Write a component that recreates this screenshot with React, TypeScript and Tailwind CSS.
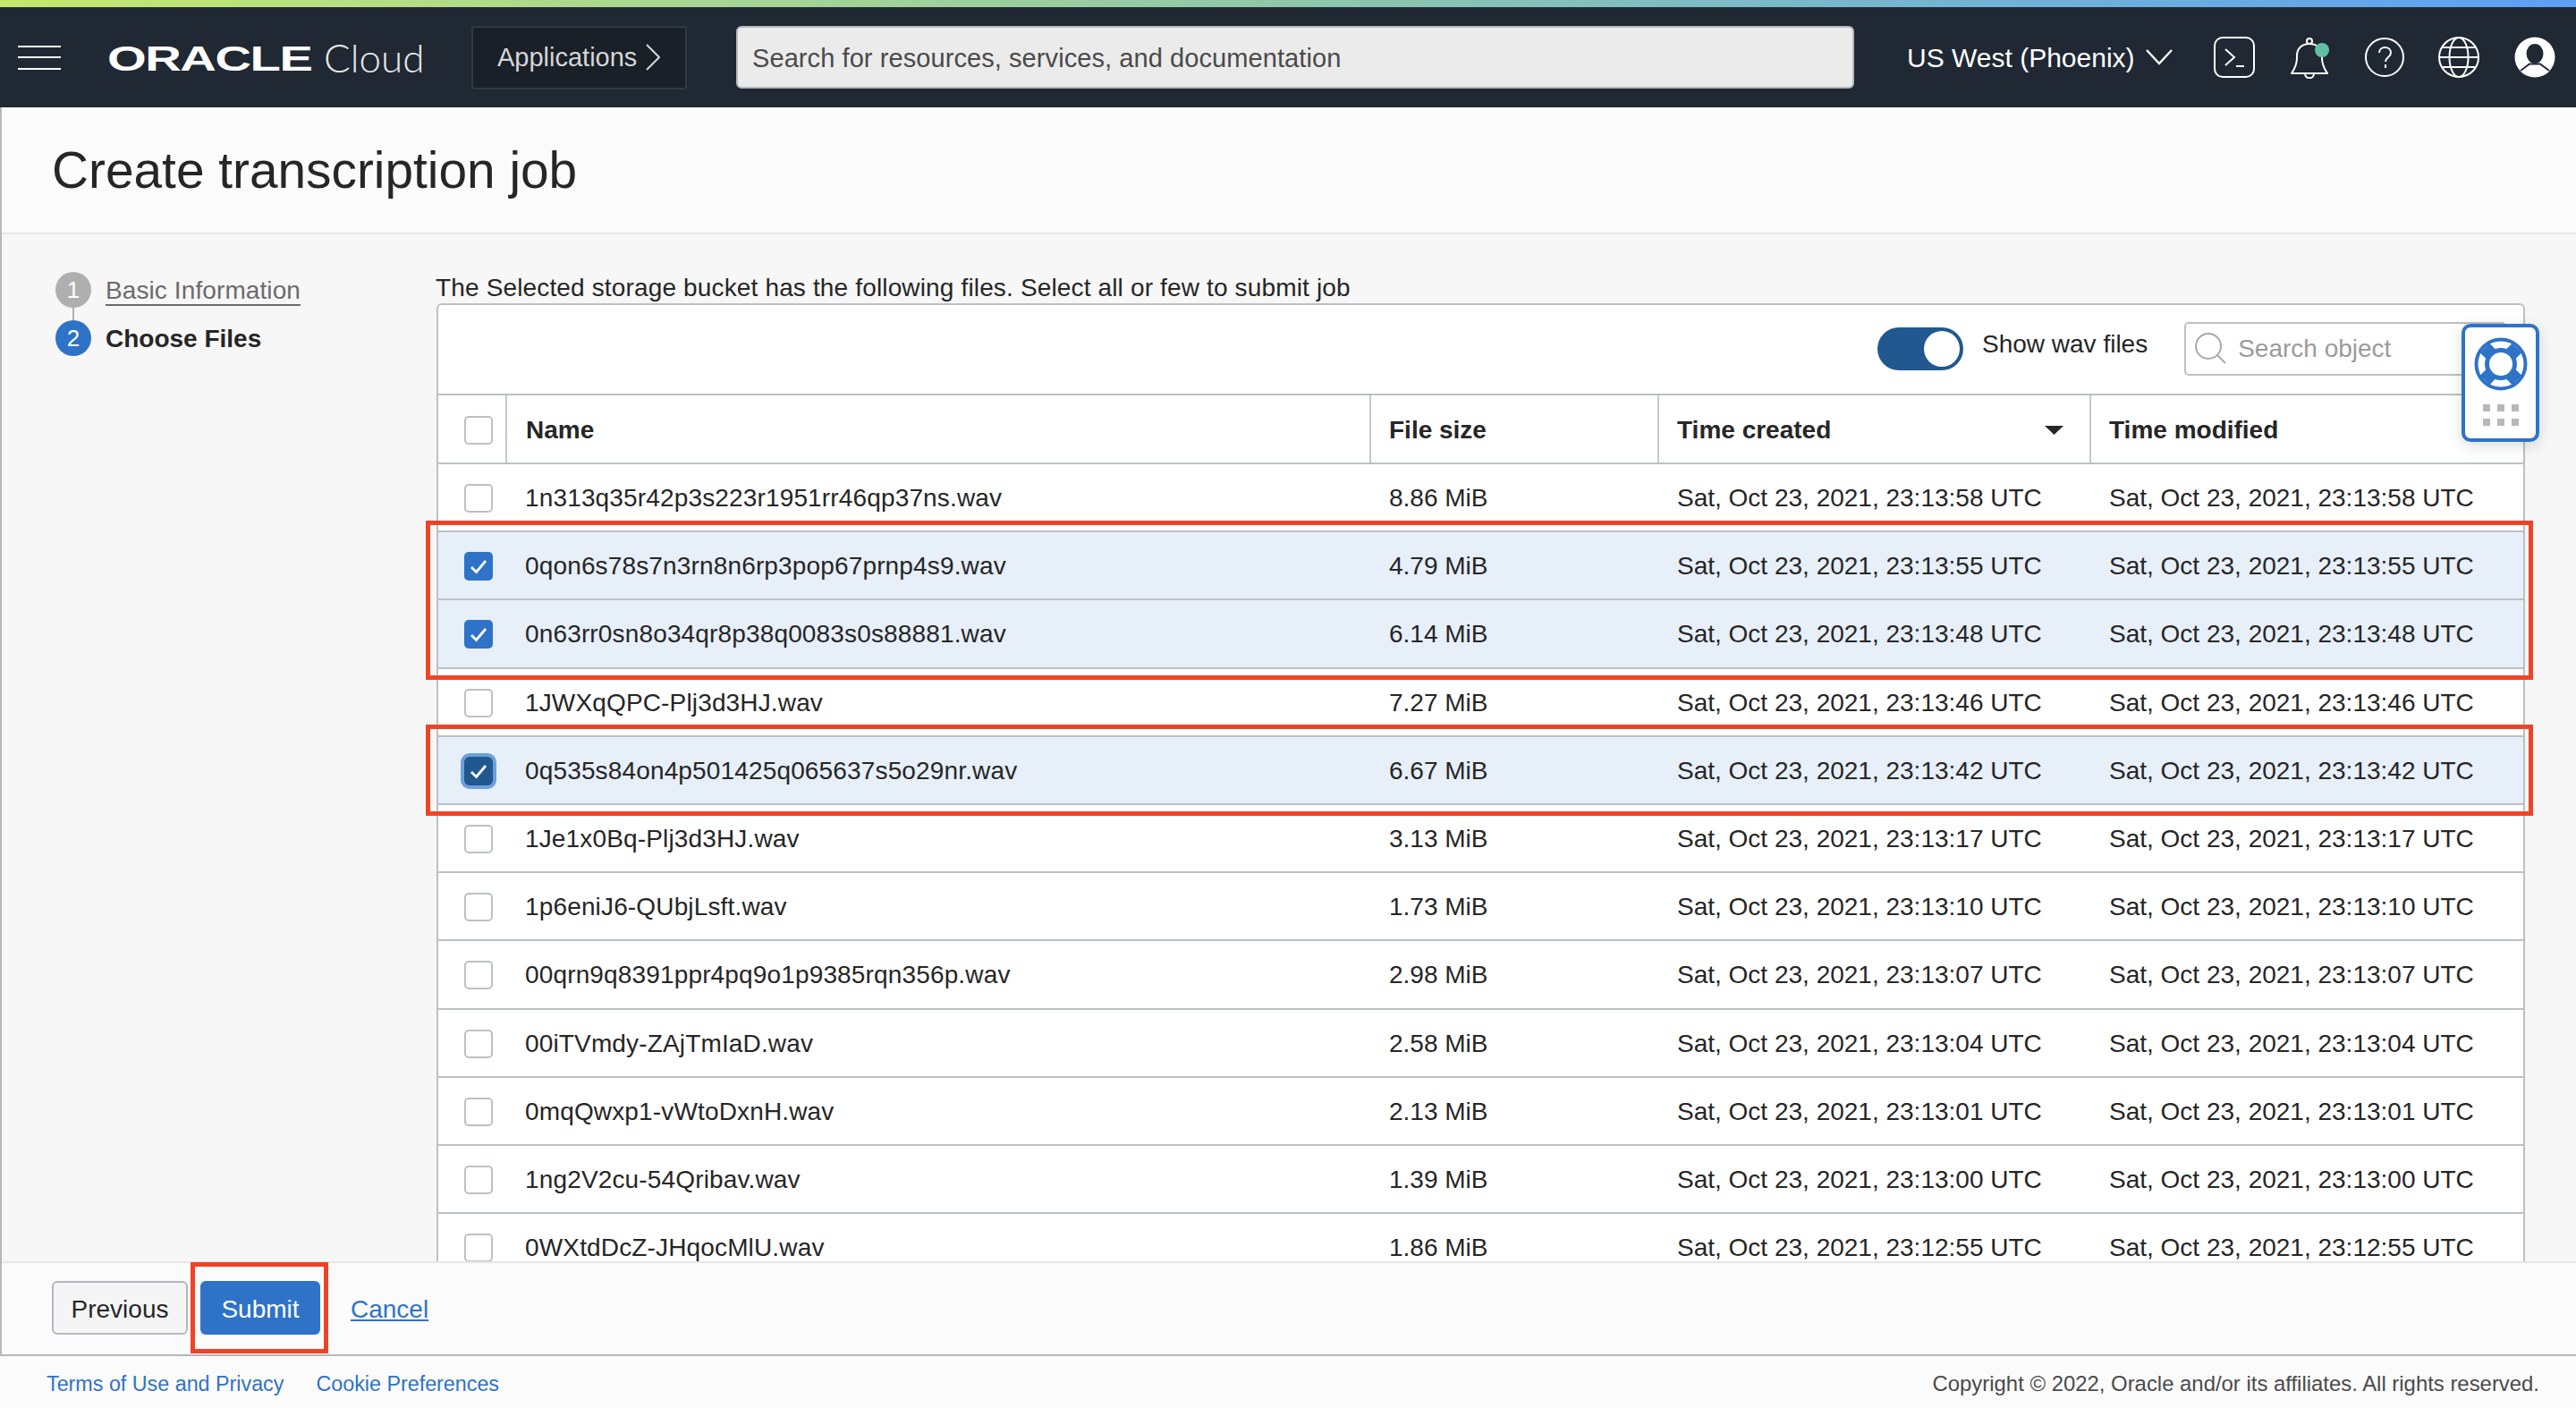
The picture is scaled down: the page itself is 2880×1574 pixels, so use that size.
import React from "react";

const rows: [string, string, string, boolean?, boolean?][] = [
  ["1n313q35r42p3s223r1951rr46qp37ns.wav", "8.86 MiB", "Sat, Oct 23, 2021, 23:13:58 UTC"],
  ["0qon6s78s7n3rn8n6rp3pop67prnp4s9.wav", "4.79 MiB", "Sat, Oct 23, 2021, 23:13:55 UTC", true],
  ["0n63rr0sn8o34qr8p38q0083s0s88881.wav", "6.14 MiB", "Sat, Oct 23, 2021, 23:13:48 UTC", true],
  ["1JWXqQPC-Plj3d3HJ.wav", "7.27 MiB", "Sat, Oct 23, 2021, 23:13:46 UTC"],
  ["0q535s84on4p501425q065637s5o29nr.wav", "6.67 MiB", "Sat, Oct 23, 2021, 23:13:42 UTC", true, true],
  ["1Je1x0Bq-Plj3d3HJ.wav", "3.13 MiB", "Sat, Oct 23, 2021, 23:13:17 UTC"],
  ["1p6eniJ6-QUbjLsft.wav", "1.73 MiB", "Sat, Oct 23, 2021, 23:13:10 UTC"],
  ["00qrn9q8391ppr4pq9o1p9385rqn356p.wav", "2.98 MiB", "Sat, Oct 23, 2021, 23:13:07 UTC"],
  ["00iTVmdy-ZAjTmIaD.wav", "2.58 MiB", "Sat, Oct 23, 2021, 23:13:04 UTC"],
  ["0mqQwxp1-vWtoDxnH.wav", "2.13 MiB", "Sat, Oct 23, 2021, 23:13:01 UTC"],
  ["1ng2V2cu-54Qribav.wav", "1.39 MiB", "Sat, Oct 23, 2021, 23:13:00 UTC"],
  ["0WXtdDcZ-JHqocMlU.wav", "1.86 MiB", "Sat, Oct 23, 2021, 23:12:55 UTC"],
];

function Check({ on, focus }: { on?: boolean; focus?: boolean }) {
  if (on) {
    return (
      <span
        className={
          focus
            ? "flex h-8 w-8 items-center justify-center rounded-[6px] bg-[#21588f] ring-4 ring-[#6f9fdb]"
            : "flex h-8 w-8 items-center justify-center rounded-[5px] bg-[#2e73c8]"
        }
      >
        <svg width="24" height="24" viewBox="0 0 24 24" fill="none" stroke="#fff" strokeWidth="2.8">
          <path d="M4 13l5.5 5.5L20 6" />
        </svg>
      </span>
    );
  }
  return <span className="block h-8 w-8 rounded-[5px] border-2 border-[#bcc0c5] bg-white" />;
}

function TableRow({ r }: { r: (typeof rows)[number] }) {
  return (
    <div className={`flex h-[76.2px] shrink-0 items-center border-b-2 border-[#bcc0c5] pt-[2px] ${r[3] ? "bg-[#e7eff9]" : "bg-white"}`}>
      <div className="flex w-[76px] shrink-0 items-center pl-[29px]">
        <Check on={r[3]} focus={r[4]} />
      </div>
      <div className="w-[967px] shrink-0 pl-[21px] tracking-[0.15px]">{r[0]}</div>
      <div className="w-[322px] shrink-0 pl-[20px]">{r[1]}</div>
      <div className="w-[482px] shrink-0 pl-[20px]">{r[2]}</div>
      <div className="flex-1 pl-[21px]">{r[2]}</div>
    </div>
  );
}

export default function App() {
  return (
    <div className="relative flex h-[1574px] w-[2880px] flex-col overflow-hidden bg-[#fbfbfb] font-['Liberation_Sans',Arial,sans-serif] text-[28px] text-[#262626]">
      <div className="h-2 shrink-0 bg-gradient-to-r from-[#c4e86c] via-[#8fc7a8] to-[#5c9ff6]" />

      <header className="flex h-[112px] shrink-0 items-center bg-[#202833] text-white">
        <div className="ml-5 flex h-[27px] w-12 flex-col justify-between">
          <span className="h-[2px] bg-white" />
          <span className="h-[2px] bg-white" />
          <span className="h-[2px] bg-white" />
        </div>
        <div className="ml-[52px] flex w-[228px] items-center overflow-visible pt-[3px]">
          <span className="inline-block origin-left scale-x-[1.44] text-[39px] font-bold leading-none tracking-[-1px]">ORACLE</span>
        </div>
        <span className="ml-[14px] w-[109px] font-['Lato',sans-serif] text-[44px] font-light leading-none text-[#e8e8e8]">Cloud</span>
        <button className="ml-[56px] flex h-[71px] w-[241px] items-center rounded-[4px] border-2 border-[#2f3945] bg-[#1a2028] pl-[27px] text-[29px] text-[#d4d6d8]">
          <span className="pt-[2px]">Applications</span>
          <svg className="ml-[10px]" width="16" height="30" viewBox="0 0 16 30" fill="none" stroke="#d4d6d8" strokeWidth="2">
            <path d="M1 1l14 14L1 29" />
          </svg>
        </button>
        <div className="ml-[55px] flex h-[70px] w-[1250px] items-center rounded-[6px] border-2 border-[#b5b8bc] bg-[#ebebeb] pl-4 pt-[3px] text-[29px] tracking-[0.08px] text-[#4a4a4a]">
          Search for resources, services, and documentation
        </div>
        <span className="ml-[59px] w-[255px] whitespace-nowrap pt-[1px] text-[30px]">US West (Phoenix)</span>
        <svg className="ml-3" width="30" height="18" viewBox="0 0 30 18" fill="none" stroke="#fff" strokeWidth="2.4">
          <path d="M1 1l14 15L29 1" />
        </svg>
        <svg className="ml-[46px]" width="46" height="46" viewBox="0 0 46 46" fill="none" stroke="#fff" strokeWidth="2">
          <rect x="1" y="1" width="44" height="44" rx="9" />
          <path d="M13 14l10 9-10 9M25 33h9" />
        </svg>
        <svg className="ml-[39px]" width="46" height="48" viewBox="0 0 46 48" fill="none">
          <circle cx="22" cy="6" r="3" stroke="#fff" strokeWidth="2" />
          <path d="M2 42c4-6 6-10 6-17v-3C8 14 14 9 22 9s14 5 14 13v3c0 7 2 11 6 17zM17 42c0 7 10 7 10 0" stroke="#fff" strokeWidth="2" strokeLinejoin="round" />
          <circle cx="36" cy="16" r="8" fill="#62bfa3" />
        </svg>
        <svg className="ml-[37px]" width="46" height="46" viewBox="0 0 46 46" fill="none" stroke="#fff" strokeWidth="2">
          <circle cx="23" cy="23" r="21" />
          <path d="M17 18c0-8 13-8 13 0 0 5-6 5-6 10M24 31v4" />
        </svg>
        <svg className="ml-[37px]" width="46" height="46" viewBox="0 0 46 46" fill="none" stroke="#fff" strokeWidth="2">
          <circle cx="23" cy="23" r="22" />
          <ellipse cx="23" cy="23" rx="10.5" ry="22" />
          <path d="M5 12h36M1 23h44M5 34h36" />
        </svg>
        <svg className="ml-[39px]" width="46" height="46" viewBox="0 0 46 46">
          <circle cx="23" cy="23" r="22.5" fill="#fff" />
          <ellipse cx="23" cy="19" rx="9.5" ry="11" fill="#202833" />
          <path d="M7 38l10-7.5h12L39 38" fill="none" stroke="#202833" strokeWidth="2" />
        </svg>
      </header>

      <main className="flex min-h-0 flex-1 flex-col border-b-2 border-l-2 border-[#b5b8bc]">
        <div className="flex h-[142px] shrink-0 items-center border-b-2 border-[#e6e6e6] pl-[56px] pt-[2px]">
          <h1 className="text-[56.8px] font-normal leading-none">Create transcription job</h1>
        </div>

        <div className="flex min-h-0 flex-1 overflow-hidden bg-[#f7f7f7]">
          <nav className="w-[486px] shrink-0 pl-[60px] pt-[42px]">
            <div className="flex h-[40px] items-center gap-4">
              <span className="flex h-10 w-10 items-center justify-center rounded-full bg-[#afafaf] text-[26px] text-white">1</span>
              <span className="border-b-2 border-[#6b6b6b] pt-[2px] leading-[31px] tracking-[0.1px] text-[#6b6b6b]">Basic Information</span>
            </div>
            <div className="ml-[19px] h-[14px] w-[2px] bg-[#afafaf]" />
            <div className="flex h-[40px] items-center gap-4">
              <span className="flex h-10 w-10 items-center justify-center rounded-full bg-[#2e73c8] text-[26px] text-white">2</span>
              <span className="pt-[2px] font-bold">Choose Files</span>
            </div>
          </nav>

          <section className="flex min-w-0 flex-1 flex-col pt-[44px]">
            <p className="-ml-px h-[33px] shrink-0 leading-[31px] tracking-[0.15px]">The Selected storage bucket has the following files. Select all or few to submit job</p>
            <div className="mr-[57px] flex min-h-0 flex-1 flex-col overflow-hidden rounded-t-[6px] border-x-2 border-t-2 border-[#bcc0c5] bg-white">
              <div className="flex h-[101px] shrink-0 items-start border-b-2 border-[#bcc0c5] pl-[1609px]">
                <span className="relative mt-[25px] h-12 w-24 shrink-0 rounded-full bg-[#21588f]">
                  <span className="absolute right-1 top-1 h-10 w-10 rounded-full bg-white" />
                </span>
                <span className="ml-[21px] mt-[23px] whitespace-nowrap">Show wav files</span>
                <div className="ml-[41px] mt-[19px] flex h-[60px] w-[360px] shrink-0 items-center rounded-[5px] border-2 border-[#bcc0c5] pl-[10px] text-[#9b9b9b]">
                  <svg width="36" height="36" viewBox="0 0 36 36" fill="none" stroke="#a9a9a9" strokeWidth="2">
                    <circle cx="15" cy="15" r="14" />
                    <path d="M25 25l9 9" />
                  </svg>
                  <span className="ml-[12px] whitespace-nowrap">Search object</span>
                </div>
              </div>

              <div className="flex h-[77px] shrink-0 items-stretch border-b-2 border-[#bcc0c5] font-bold">
                <div className="flex w-[77px] shrink-0 items-center border-r-2 border-[#c4c7cb] pl-[29px] pt-[2px]">
                  <Check />
                </div>
                <div className="flex w-[966px] shrink-0 items-center border-r-2 border-[#c4c7cb] pl-[21px] pt-[2px]">Name</div>
                <div className="flex w-[322px] shrink-0 items-center border-r-2 border-[#c4c7cb] pl-[20px] pt-[2px]">File size</div>
                <div className="flex w-[483px] shrink-0 items-center justify-between border-r-2 border-[#c4c7cb] pl-[20px] pr-[29px] pt-[2px]">
                  Time created
                  <svg width="21" height="10" viewBox="0 0 21 10">
                    <path d="M0 0h21L10.5 10z" fill="#262626" />
                  </svg>
                </div>
                <div className="flex flex-1 items-center pl-[20px] pt-[2px]">Time modified</div>
              </div>

              {rows.map((r) => (
                <TableRow key={r[0]} r={r} />
              ))}
            </div>
          </section>
        </div>

        <div className="flex h-[104px] shrink-0 items-center border-t-2 border-[#e6e6e6] bg-[#fbfbfb] pl-[56px] pb-[2px]">
          <button className="h-[60px] w-[152px] rounded-[6px] border-2 border-[#b5b8bc] bg-[#f5f5f5] pt-[4px]">Previous</button>
          <button className="ml-[14px] h-[60px] w-[134px] rounded-[6px] bg-[#2e73c8] pt-[4px] text-white">Submit</button>
          <a className="ml-[34px] pt-[4px] text-[#2e73c8] underline underline-offset-2">Cancel</a>
        </div>
      </main>

      <footer className="flex h-[58px] shrink-0 items-center justify-between bg-[#fbfbfb] pl-[52px] pr-[41px] pt-[4px] text-[#4a4a4a]">
        <div className="flex gap-[36px] text-[23.3px] text-[#2e73c8]">
          <span>Terms of Use and Privacy</span>
          <span>Cookie Preferences</span>
        </div>
        <span className="text-[23.9px]">Copyright © 2022, Oracle and/or its affiliates. All rights reserved.</span>
      </footer>

      <div className="pointer-events-none absolute left-[476px] top-[582px] h-[178px] w-[2356px] border-[5px] border-[#ef4327]" />
      <div className="pointer-events-none absolute left-[476px] top-[810px] h-[102px] w-[2356px] border-[5px] border-[#ef4327]" />
      <div className="pointer-events-none absolute left-[213px] top-[1411px] h-[102px] w-[154px] border-[5px] border-[#ef4327]" />

      <div className="absolute left-[2752px] top-[362px] flex h-[132px] w-[87px] flex-col items-center rounded-[10px] border-[4px] border-[#2e73c8] bg-white pt-[11px] shadow-[0_4px_16px_rgba(0,0,0,0.15)]">
        <svg width="60" height="60" viewBox="0 0 60 60" fill="none">
          <circle cx="30" cy="30" r="27.5" stroke="#2e73c8" strokeWidth="4" />
          <path d="M12 12l36 36M48 12L12 48" stroke="#2e73c8" strokeWidth="15" />
          <circle cx="30" cy="30" r="15.5" fill="#fff" stroke="#2e73c8" strokeWidth="5" />
        </svg>
        <div className="mt-[15px] grid grid-cols-3 gap-x-[8px] gap-y-[8px]">
          {[0, 1, 2, 3, 4, 5].map((i) => (
            <span key={i} className="h-2 w-2 bg-[#b5b8bc]" />
          ))}
        </div>
      </div>
    </div>
  );
}
